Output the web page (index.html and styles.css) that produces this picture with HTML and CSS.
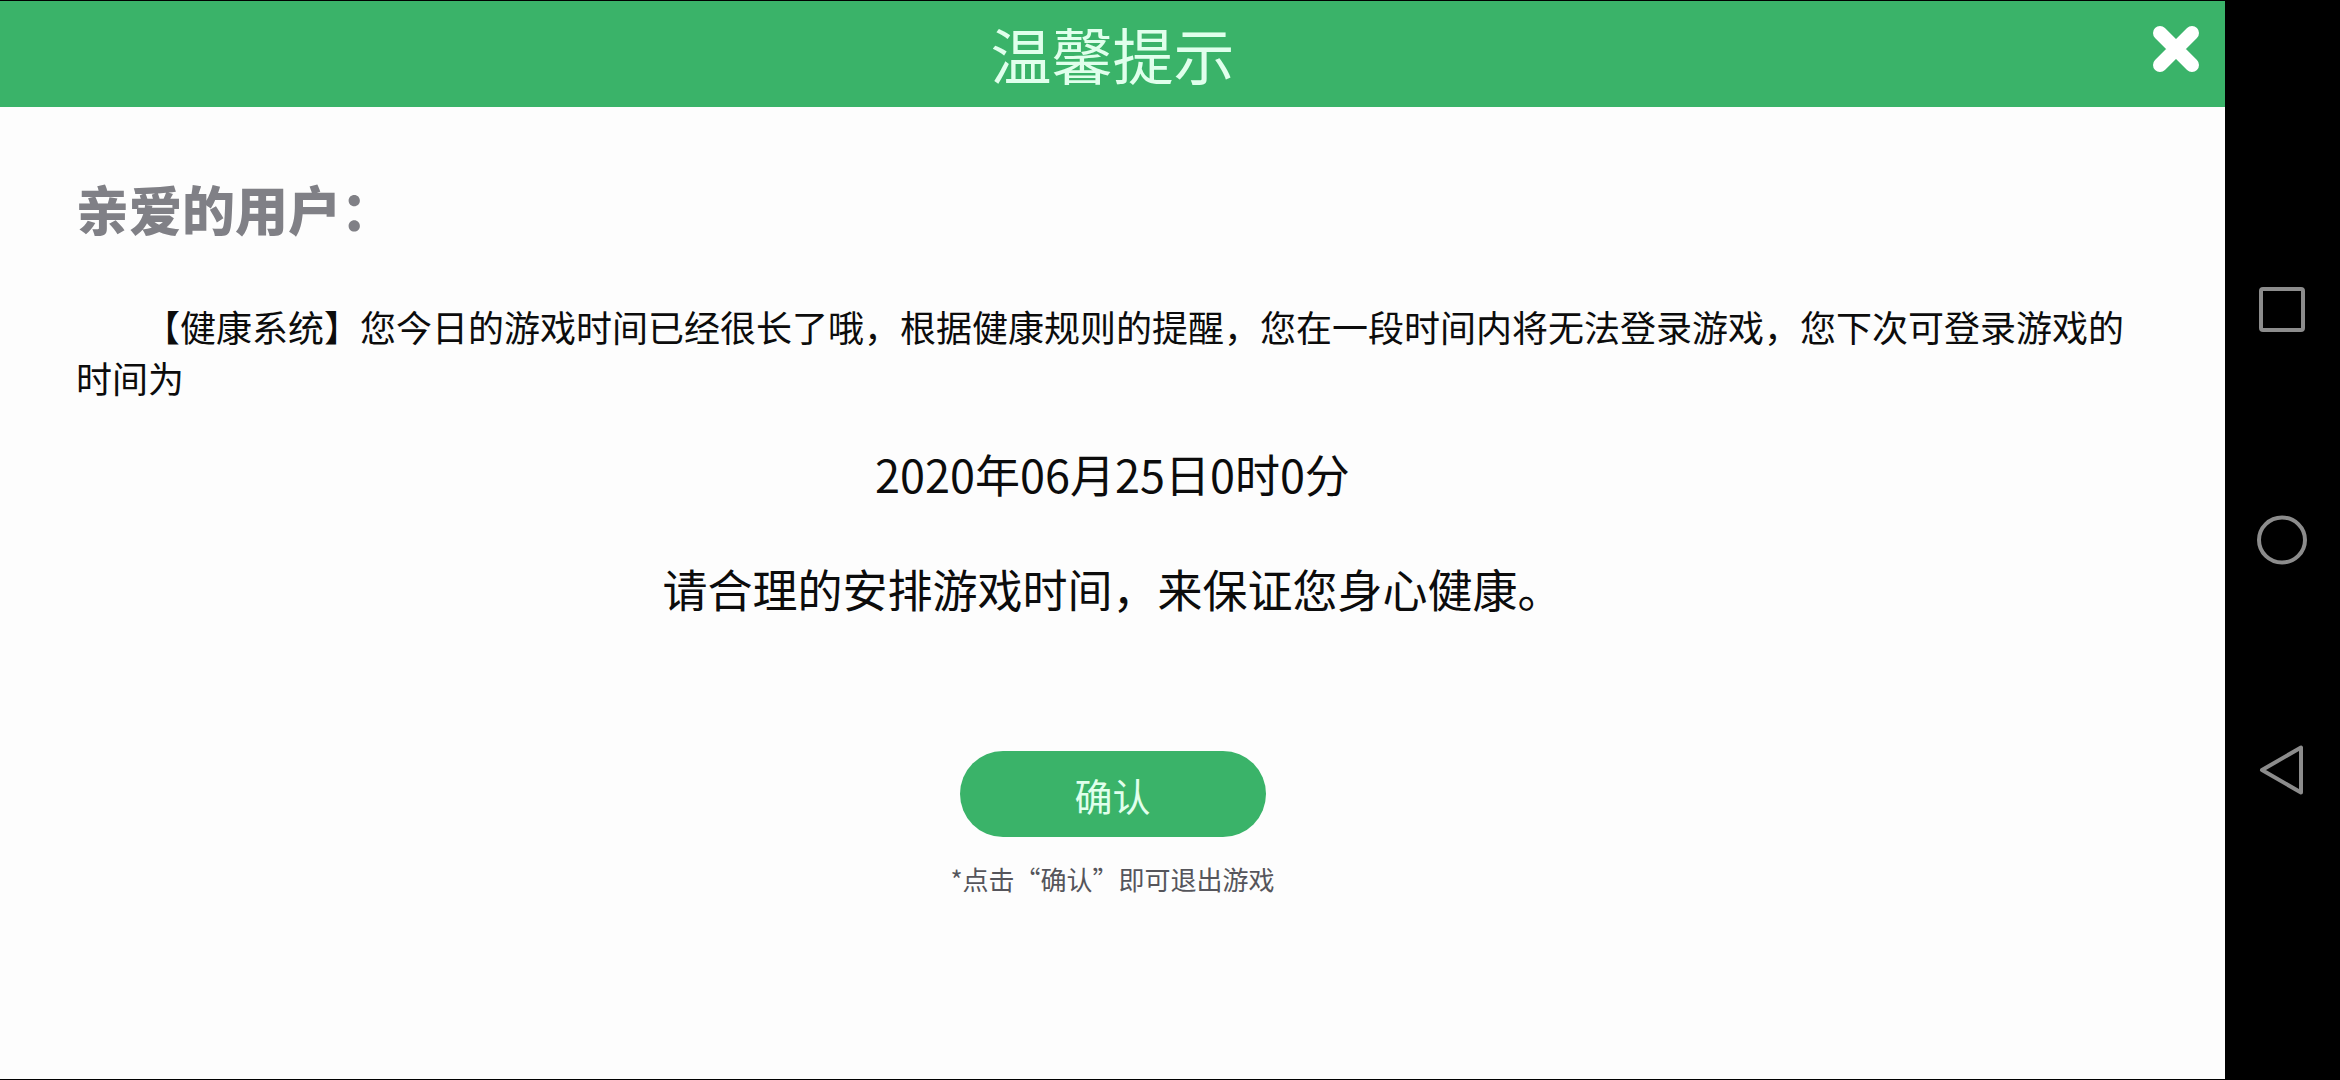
FILE: index.html
```
<!DOCTYPE html>
<html lang="zh-CN">
<head>
<meta charset="utf-8">
<meta name="viewport" content="width=device-width, initial-scale=1">
<title>温馨提示</title>
<link rel="stylesheet" href="styles.css">
</head>
<body>
<div class="screen">
  <main class="notice">
    <header class="notice-header">
      <h1 class="notice-title">温馨提示</h1>
      <button class="close" type="button" aria-label="关闭">
        <svg viewBox="0 0 46 46" width="46" height="46" aria-hidden="true">
          <path d="M7 7 39 39M39 7 7 39"/>
        </svg>
      </button>
    </header>
    <section class="notice-body">
      <h2 class="greeting">亲爱的用户：</h2>
      <p class="message">【健康系统】您今日的游戏时间已经很长了哦，根据健康规则的提醒，您在一段时间内将无法登录游戏，您下次可登录游戏的时间为</p>
      <div class="highlights">
        <p><time datetime="2020-06-25T00:00">2020年06月25日0时0分</time></p>
        <p>请合理的安排游戏时间，来保证您身心健康。</p>
      </div>
      <button class="confirm" type="button">确认</button>
      <p class="hint">*点击“确认”即可退出游戏</p>
    </section>
  </main>
  <nav class="system-nav" aria-label="系统导航">
    <button class="nav-button" type="button" aria-label="最近任务">
      <svg viewBox="0 0 52 52" width="52" height="52" aria-hidden="true"><rect x="5" y="5" width="42" height="41" rx="2"/></svg>
    </button>
    <button class="nav-button" type="button" aria-label="主屏幕">
      <svg viewBox="0 0 52 52" width="52" height="52" aria-hidden="true"><ellipse cx="26" cy="26" rx="23" ry="22.5"/></svg>
    </button>
    <button class="nav-button" type="button" aria-label="返回">
      <svg viewBox="0 0 52 52" width="52" height="52" aria-hidden="true"><path d="M45 3.500V48.500L6 26Z"/></svg>
    </button>
  </nav>
</div>
</body>
</html>
```
FILE: styles.css
```
* {
  box-sizing: border-box;
}

body {
  margin: 0;
  background: #000;
  color: #0c0c0c;
  font-family: "Noto Sans CJK SC", "Noto Sans", sans-serif;
}

h1,
h2,
p {
  margin: 0;
  font-weight: 400;
}

button {
  padding: 0;
  border: 0;
  background: none;
  font: inherit;
  cursor: pointer;
}

svg {
  display: block;
  fill: none;
  stroke-linejoin: round;
  stroke-linecap: round;
}

.screen {
  display: flex;
  min-height: 100vh;
  padding: 1px 0;
}

.notice {
  flex: 1;
  display: flex;
  flex-direction: column;
  background: #fdfdfd;
}

.notice-header {
  display: grid;
  grid-template-columns: 1fr auto 1fr;
  height: 106px;
  padding: 0 26px;
  background: #3ab369;
}

.notice-title {
  grid-column: 2;
  align-self: center;
  color: #e0ffec;
  font-size: 61px;
  line-height: 80px;
}

.close {
  justify-self: end;
  align-self: start;
  margin-top: 25px;
}

.close svg {
  stroke: #fff;
  stroke-width: 14;
}

.notice-body {
  display: flex;
  flex-direction: column;
  padding: 69px 76px;
}

.greeting {
  color: #808086;
  font-size: 53px;
  font-weight: 900;
  line-height: 64px;
}

.message {
  margin-top: 61px;
  font-size: 36px;
  line-height: 51px;
  text-indent: 68px;
}

.highlights {
  display: flex;
  flex-direction: column;
  gap: 43px;
  margin-top: 35px;
  font-size: 45px;
  line-height: 72px;
  text-align: center;
}

.confirm {
  align-self: center;
  width: 306px;
  height: 86px;
  margin-top: 126px;
  border-radius: 43px;
  background: #3ab369;
  color: #e0ffec;
  font-size: 38px;
}

.hint {
  margin-top: 24px;
  color: #55555b;
  font-size: 26px;
  line-height: 36px;
  text-align: center;
}

.system-nav {
  display: flex;
  flex-direction: column;
  align-items: center;
  justify-content: center;
  gap: 178px;
  width: 115px;
  padding-right: 2px;
  background: #000;
}

.nav-button svg {
  stroke: #8c8c8c;
  stroke-width: 4;
}
```
